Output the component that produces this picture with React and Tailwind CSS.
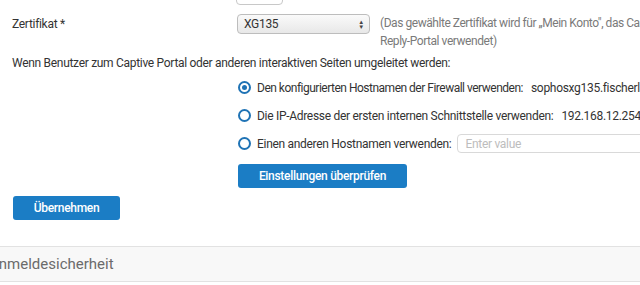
import React from "react";

function Radio({ checked }) {
  return (
    <span className="relative flex h-[13px] w-[13px] shrink-0 items-center justify-center rounded-full border-2 border-[#1f73b5]">
      {checked && <span className="h-[5px] w-[5px] rounded-full bg-[#1f73b5]" />}
    </span>
  );
}

export default function App() {
  return (
    <div className="relative h-[285px] w-[640px] overflow-hidden bg-white font-['Roboto',sans-serif] text-[12px] tracking-[-0.3px] text-[#333]">
      {/* partial top input */}
      <div className="absolute left-[236px] top-[-16px] h-[21px] w-[47px] rounded-[4px] border border-[#c8c8c8] bg-white" />

      <div className="flex flex-col pt-[14px]">
        {/* Zertifikat row */}
        <div className="flex items-start">
          <div className="w-[237px] shrink-0 pl-[12px] pt-[1px]">Zertifikat *</div>
          <div className="flex h-[20px] w-[133px] shrink-0 items-center justify-between rounded-[4px] border border-[#bdbdbd] bg-gradient-to-b from-[#fafafa] to-[#e8e8e8] pl-[6px] pr-[5px]">
            <span>XG135</span>
            <span className="flex flex-col text-[6px] leading-[5px] text-[#444]">
              <span>▲</span>
              <span>▼</span>
            </span>
          </div>
          <div className="ml-[10px] whitespace-nowrap leading-[18px] tracking-[-0.45px] text-[#7a7a7a]">
            (Das gewählte Zertifikat wird für „Mein Konto", das Captive Portal und das
            <br />
            Reply-Portal verwendet)
          </div>
        </div>

        {/* Question */}
        <div className="mt-[4px] whitespace-nowrap pl-[12px]">
          Wenn Benutzer zum Captive Portal oder anderen interaktiven Seiten umgeleitet werden:
        </div>

        {/* Radios */}
        <div className="mt-[8px] flex flex-col gap-[13px] pl-[238px]">
          <div className="flex h-[15px] items-center gap-[6px] whitespace-nowrap">
            <Radio checked />
            <span className="tracking-[-0.5px]">Den konfigurierten Hostnamen der Firewall verwenden:</span>
            <span className="ml-[2px]">sophosxg135.fischerlan.local</span>
          </div>
          <div className="flex h-[15px] items-center gap-[6px] whitespace-nowrap">
            <Radio />
            <span>Die IP-Adresse der ersten internen Schnittstelle verwenden:</span>
            <span className="ml-[2px]">192.168.12.254</span>
          </div>
          <div className="flex h-[15px] items-center gap-[6px] whitespace-nowrap">
            <Radio />
            <span>Einen anderen Hostnamen verwenden:</span>
            <div className="flex h-[19px] w-[220px] shrink-0 items-center rounded-[4px] border border-[#d9d9d9] pl-[7px] text-[#bdbdbd]">
              Enter value
            </div>
          </div>
        </div>

        <div className="mt-[13px] pl-[238px]">
          <button className="h-[24px] w-[169px] rounded-[3px] bg-[#1b7dc5] text-[12px] font-medium text-white">
            Einstellungen überprüfen
          </button>
        </div>

        <div className="mt-[8px] pl-[13px]">
          <button className="h-[24px] w-[107px] rounded-[3px] bg-[#1b7dc5] text-[12px] font-medium text-white">
            Übernehmen
          </button>
        </div>

        <div className="mt-[26px] flex h-[36px] items-center border-y border-[#e2e2e2] bg-[#f8f8f8] text-[15px] tracking-normal text-[#6b6b6b]">
          <span className="ml-[-11px]">Anmeldesicherheit</span>
        </div>
      </div>
    </div>
  );
}
